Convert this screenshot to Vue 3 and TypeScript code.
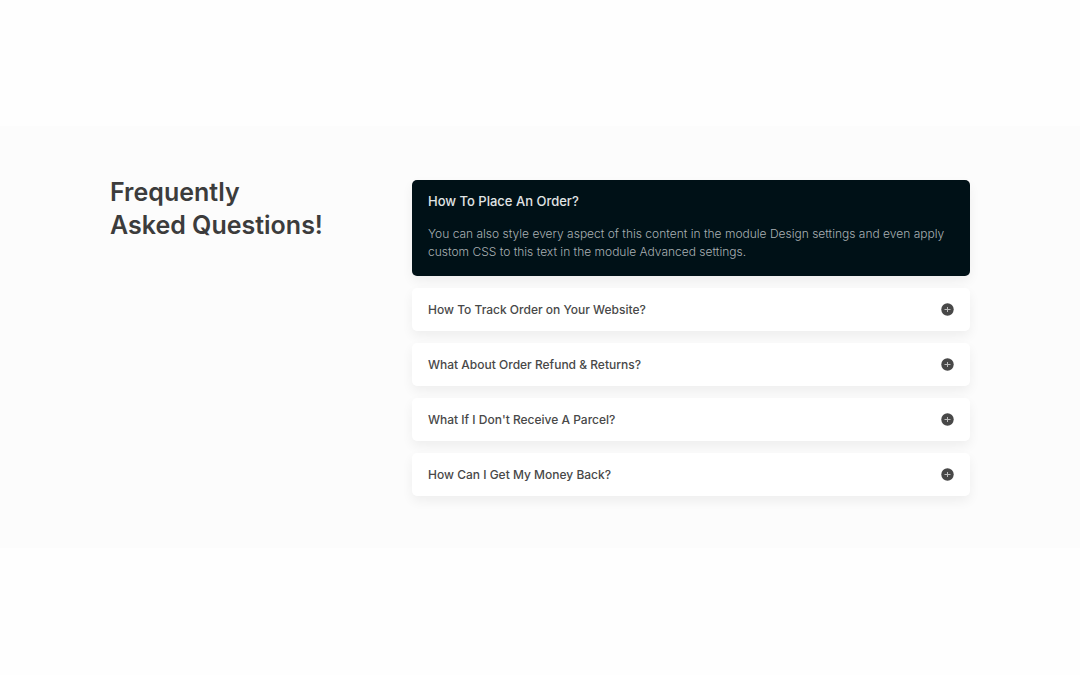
<script setup lang="ts">
import { ref } from 'vue'

interface Faq {
  id: number
  question: string
  answer: string
}

const answer =
  'You can also style every aspect of this content in the module Design settings and even apply custom CSS to this text in the module Advanced settings.'

const faqs: Faq[] = [
  { id: 1, question: 'How To Place An Order?', answer },
  { id: 2, question: 'How To Track Order on Your Website?', answer },
  { id: 3, question: 'What About Order Refund & Returns?', answer },
  { id: 4, question: "What If I Don't Receive A Parcel?", answer },
  { id: 5, question: 'How Can I Get My Money Back?', answer },
]

const openId = ref<number>(1)
</script>

<template>
  <main class="page">
    <section class="faq" aria-labelledby="faq-title">
      <div class="inner">
        <h2 id="faq-title" class="title">Frequently<br />Asked Questions!</h2>
        <div class="list">
          <article v-for="faq in faqs" :key="faq.id" class="card" :class="{ open: openId === faq.id }">
            <h3 class="heading">
              <button
                :id="`question-${faq.id}`"
                class="toggle"
                type="button"
                :aria-expanded="openId === faq.id"
                :aria-controls="`answer-${faq.id}`"
                @click="openId = faq.id"
              >
                <span>{{ faq.question }}</span>
                <svg v-if="openId !== faq.id" class="icon" viewBox="0 0 13 13" aria-hidden="true">
                  <circle cx="6.5" cy="6.5" r="6.2" fill="#484848" />
                  <path d="M3.5 6.5h6M6.5 4v5" stroke="#bdbdbd" stroke-width="1" />
                </svg>
              </button>
            </h3>
            <p
              v-show="openId === faq.id"
              :id="`answer-${faq.id}`"
              class="answer"
              role="region"
              :aria-labelledby="`question-${faq.id}`"
            >
              {{ faq.answer }}
            </p>
          </article>
        </div>
      </div>
    </section>
  </main>
</template>

<style>
body {
  margin: 0;
  background: #fefefe;
}
</style>

<style scoped>
.page {
  box-sizing: border-box;
  min-height: 100vh;
  padding-bottom: 2px;
  display: flex;
  flex-direction: column;
  justify-content: center;
  font-family: Inter, 'Liberation Sans', sans-serif;
  color: #3c3c3c;
}

.faq {
  background: #fcfcfc;
  padding: 54px 24px 52px;
}

.inner {
  max-width: 860px;
  margin: 0 auto;
  display: grid;
  grid-template-columns: 290px minmax(0, 1fr);
  column-gap: 12px;
}

.title {
  margin: -4px 0 0;
  font-size: 25px;
  line-height: 33px;
  font-weight: 600;
}

.list {
  display: flex;
  flex-direction: column;
  gap: 12px;
}

.card {
  background: #fff;
  border-radius: 5px;
  box-shadow: 0 5px 12px rgba(0, 0, 0, 0.06);
}

.heading {
  margin: 0;
}

.toggle {
  width: 100%;
  display: flex;
  align-items: center;
  justify-content: space-between;
  padding: 0 16px;
  border: 0;
  background: none;
  font-family: inherit;
  font-size: 12px;
  line-height: 43px;
  font-weight: 500;
  color: #484848;
  text-align: left;
  cursor: pointer;
}

.icon {
  width: 13px;
  height: 13px;
  flex: none;
}

.open {
  background: #001117;
}

.open .toggle {
  font-size: 13px;
  color: #e0e4e5;
}

.answer {
  margin: 0;
  padding: 2px 16px 15px;
  font-size: 12px;
  line-height: 18px;
  font-weight: 300;
  color: #a9b0b3;
}
</style>
